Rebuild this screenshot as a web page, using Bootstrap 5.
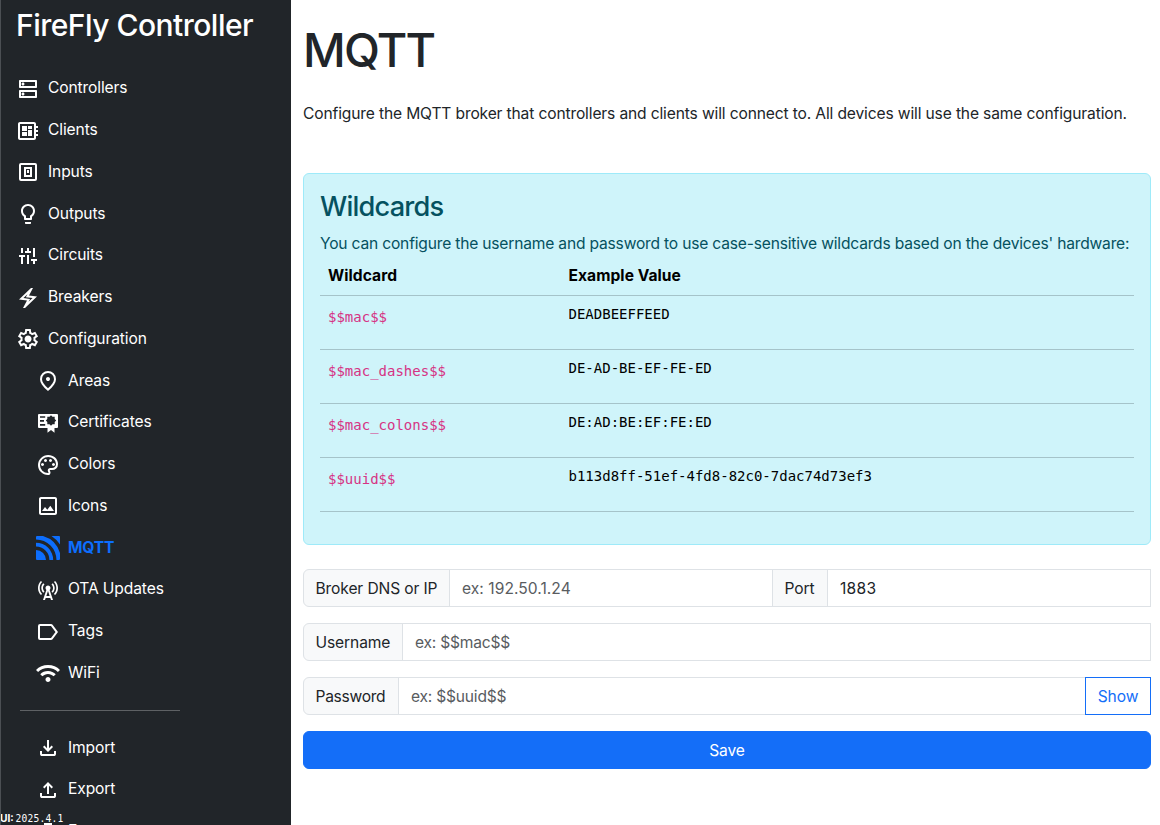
<!DOCTYPE html>
<html lang="en">
<head>
<meta charset="utf-8">
<meta name="viewport" content="width=device-width, initial-scale=1">
<title>FireFly Controller</title>
<link href="https://cdn.jsdelivr.net/npm/bootstrap@5.3.0/dist/css/bootstrap.min.css" rel="stylesheet">
<script src="https://cdn.jsdelivr.net/npm/bootstrap@5.3.0/dist/js/bootstrap.bundle.min.js"></script>
<style>
body{font-family:Inter,"Liberation Sans",sans-serif;letter-spacing:-.12px}
.app-text,.form-control,.input-group-text,.btn{font-size:15.6px;line-height:24px;letter-spacing:-.12px}
.form-control,.input-group-text,.btn{padding-top:7px;padding-bottom:5px}
.input-group-text{padding-left:11.5px}
.sidebar{width:291px;border-left:1px solid #4b4f53;background:#212529}
.brand{font-size:30px;letter-spacing:-.52px;line-height:36px;padding:7px 0 0 15px;margin-bottom:23.5px}
.side-link{height:41.75px;padding-top:2px;padding-left:15px;gap:8px;color:#fff;font-size:15.6px;line-height:24px}
.side-sub .side-link{padding-left:35px}
.side-link:hover{color:#fff}
.side-link svg{width:24px;height:24px;fill:currentColor;margin-top:1px;flex:none}
.side-link.active{color:#0d6efd;font-weight:700;letter-spacing:-.2px}
.side-rule{width:160px;margin:16.8px 0 15.2px 19px;border-color:#fff;opacity:.28}
.version{font-size:10.2px;line-height:12px;left:-1px;bottom:0;letter-spacing:0}
.version .ver-num{font-family:"DejaVu Sans Mono",monospace;font-size:9.6px;letter-spacing:.2px;margin-left:-1px}
.page{padding:21px 9px 0 12px}
.page-title{font-size:46.8px;line-height:58px;letter-spacing:-1.8px;margin-bottom:23px}
.page-lead{margin-bottom:47px;letter-spacing:-.143px}
.alert-info{--bs-alert-bg:#cff4fa;--bs-alert-color:#055160;--bs-alert-border-color:#9eeaf9}
.wild-title{font-size:27.2px;line-height:32.6px;letter-spacing:-.8px;padding-top:1px}
.wild-text{letter-spacing:-.19px}
.wild-table{--bs-table-bg:transparent;--bs-table-color:#000;--bs-table-border-color:#a5c3c9;line-height:24px}
.wild-table th{font-size:15.6px;letter-spacing:.05px;width:240.5px;padding-bottom:7px}
.wild-table th+th{width:auto}
.wild-table pre{font-size:14px;line-height:21px;margin-bottom:16px}
.wild-table pre,.wild-table code{font-family:"DejaVu Sans Mono",monospace;letter-spacing:0}
.wild-table td{height:54px}
.wild-table code{font-size:14px;line-height:21px}
.input-group{height:38px}
.input-group>.form-control:last-child,.input-group>.btn:last-child{border-radius:0}
.input-group .form-control::placeholder{color:#595c5f}
.form-control.in-digits{letter-spacing:.04px}
.form-control.in-port{letter-spacing:.25px}
.form-control.in-wild{letter-spacing:-.22px}
.lbl-host{width:147px}.lbl-port{width:56px}.lbl-user{width:100px}.lbl-pass{width:96px}
.lbl-pass,.lbl-user,.lbl-host{white-space:nowrap}
.lbl-pass{letter-spacing:-.3px}
.btn-show{width:66px;padding-left:0;padding-right:0;background:#fff}
.btn-primary,.btn-show{--bs-btn-border-color:#146ef8;--bs-btn-color:#146ef8}
.btn-primary{--bs-btn-bg:#146ef8;--bs-btn-color:#fff}
</style>
</head>
<body class="vh-100 overflow-hidden">
<div class="d-flex vh-100">
  <nav class="sidebar position-relative vh-100 overflow-hidden flex-shrink-0 text-white">
    <h2 class="brand">FireFly Controller</h2>
    <div class="d-flex flex-column">
      <a class="side-link d-flex align-items-center text-decoration-none" href="#"><svg viewBox="0 0 24 24"><path d="M19 15v4H5v-4h14m1-2H4c-.55 0-1 .45-1 1v6c0 .55.45 1 1 1h16c.55 0 1-.45 1-1v-6c0-.55-.45-1-1-1zM7 18.5c-.82 0-1.5-.67-1.5-1.5s.68-1.5 1.5-1.5 1.5.67 1.5 1.5-.67 1.5-1.5 1.5zM19 5v4H5V5h14m1-2H4c-.55 0-1 .45-1 1v6c0 .55.45 1 1 1h16c.55 0 1-.45 1-1V4c0-.55-.45-1-1-1zM7 8.5c-.82 0-1.5-.67-1.5-1.5S6.18 5.5 7 5.5s1.5.68 1.5 1.5S7.83 8.5 7 8.5z"/></svg>Controllers</a>
      <a class="side-link d-flex align-items-center text-decoration-none" href="#"><svg viewBox="0 0 24 24"><path d="M22 9V7h-2V5c0-1.1-.9-2-2-2H4c-1.1 0-2 .9-2 2v14c0 1.1.9 2 2 2h14c1.1 0 2-.9 2-2v-2h2v-2h-2v-2h2v-2h-2V9h2zm-4 10H4V5h14v14zM6 13h5v4H6zm6-6h4v3h-4zM6 7h5v5H6zm6 4h4v6h-4z"/></svg>Clients</a>
      <a class="side-link d-flex align-items-center text-decoration-none" href="#"><svg viewBox="0 0 24 24"><path fill-rule="evenodd" d="M5 3h14a2 2 0 0 1 2 2v14a2 2 0 0 1-2 2H5a2 2 0 0 1-2-2V5a2 2 0 0 1 2-2zm0 2v14h14V5zM8 7h8v10H8zm2 2v6h4V9zm1 1h2v3h-2z"/></svg>Inputs</a>
      <a class="side-link d-flex align-items-center text-decoration-none" href="#"><svg viewBox="0 0 24 24"><path d="M9 21c0 .55.45 1 1 1h4c.55 0 1-.45 1-1v-1H9v1zm3-19C8.14 2 5 5.14 5 9c0 2.38 1.19 4.47 3 5.74V17c0 .55.45 1 1 1h6c.55 0 1-.45 1-1v-2.26c1.81-1.27 3-3.36 3-5.74 0-3.86-3.14-7-7-7zm2.85 11.1l-.85.6V16h-4v-2.3l-.85-.6C7.8 12.16 7 10.63 7 9c0-2.76 2.24-5 5-5s5 2.24 5 5c0 1.63-.8 3.16-2.15 4.1z"/></svg>Outputs</a>
      <a class="side-link d-flex align-items-center text-decoration-none" href="#"><svg viewBox="0 -960 960 960"><path d="M200-160v-280h-80v-80h240v80h-80v280h-80Zm0-440v-200h80v200h-80Zm160 0v-80h80v-120h80v120h80v80H360Zm80 440v-360h80v360h-80Zm240 0v-120h-80v-80h240v80h-80v120h-80Zm0-280v-360h80v360h-80Z"/></svg>Circuits</a>
      <a class="side-link d-flex align-items-center text-decoration-none" href="#"><svg viewBox="0 -960 960 960"><path d="m280-80 160-300-320-40 480-460h80L520-580l320 40L360-80h-80Zm222-247 161-154-269-34 63-117-160 154 268 33-63 118Z"/></svg>Breakers</a>
      <a class="side-link d-flex align-items-center text-decoration-none" href="#"><svg viewBox="0 -960 960 960"><path d="m370-80-16-128q-13-5-24.5-12T307-235l-119 50L78-375l103-78q-1-7-1-13.5v-27q0-6.500 1-13.500L78-585l110-190 119 50q11-8 23-15t24-12l16-128h220l16 128q13 5 24.5 12t22.500 15l119-50 110 190-103 78q1 7 1 13.500v27q0 6.500-2 13.500l103 78-110 190-118-50q-11 8-23 15t-24 12L590-80H370Zm70-80h79l14-106q31-8 57.500-23.500T639-327l99 41 39-68-86-65q5-14 7-29.500t2-31.500q0-16-2-31.500t-7-29.500l86-65-39-68-99 42q-22-23-48.500-38.500T533-694l-13-106h-79l-14 106q-31 8-57.500 23.500T321-633l-99-41-39 68 86 64q-5 15-7 30t-2 32q0 16 2 31t7 30l-86 65 39 68 99-42q22 23 48.500 38.500T427-266l13 106Zm42-180q58 0 99-41t41-99q0-58-41-99t-99-41q-59 0-99.500 41T342-480q0 58 40.500 99t99.500 41Z"/></svg>Configuration</a>
    </div>
    <div class="side-sub d-flex flex-column">
      <a class="side-link d-flex align-items-center text-decoration-none" href="#"><svg viewBox="0 -960 960 960"><path d="M480-480q33 0 56.500-23.500T560-560q0-33-23.500-56.500T480-640q-33 0-56.500 23.500T400-560q0 33 23.500 56.500T480-480Zm0 294q122-112 181-203.500T720-552q0-109-69.500-178.500T480-800q-101 0-170.500 69.500T240-552q0 71 59 162.500T480-186Zm0 106Q319-217 239.500-334.500T160-552q0-150 96.500-239T480-880q127 0 223.500 89T800-552q0 100-79.500 217.500T480-80Z"/></svg>Areas</a>
      <a class="side-link d-flex align-items-center text-decoration-none" href="#"><svg viewBox="0 0 24 24"><path fill-rule="evenodd" d="M3 3h18a1 1 0 0 1 1 1v12a1 1 0 0 1-1 1h-2.500v4.700L15 19l-3.500 2.700V17H3a1 1 0 0 1-1-1V4a1 1 0 0 1 1-1zm1 2.200v1.600h5.200V5.200zM4 9v1.700h4V9zm0 4v1.700h5.200V13zM15 4.300l-1.500 1.500h-2.200v2.200L9.800 9.500l1.500 1.600v2.200h2.200l1.500 1.500 1.500-1.500h2.200v-2.200l1.500-1.600L18.700 8V5.800h-2.200z"/></svg>Certificates</a>
      <a class="side-link d-flex align-items-center text-decoration-none" href="#"><svg viewBox="0 -960 960 960"><path d="M480-80q-82 0-155-31.500t-127.500-86Q143-252 111.500-325T80-480q0-83 32.500-156t88-127Q256-817 330-848.500T488-880q80 0 151 27.500t124.500 76q53.500 48.500 85 115T880-518q0 115-70 176.500T640-280h-74q-9 0-12.500 5t-3.500 11q0 12 15 34.500t15 51.500q0 50-27.500 74T480-80Zm0-400Zm-220 40q26 0 43-17t17-43q0-26-17-43t-43-17q-26 0-43 17t-17 43q0 26 17 43t43 17Zm120-160q26 0 43-17t17-43q0-26-17-43t-43-17q-26 0-43 17t-17 43q0 26 17 43t43 17Zm200 0q26 0 43-17t17-43q0-26-17-43t-43-17q-26 0-43 17t-17 43q0 26 17 43t43 17Zm120 160q26 0 43-17t17-43q0-26-17-43t-43-17q-26 0-43 17t-17 43q0 26 17 43t43 17ZM480-160q9 0 14.500-5t5.500-13q0-14-15-33t-15-57q0-42 29-67t71-25h70q66 0 113-38.500T800-518q0-121-92.500-201.500T488-800q-136 0-232 93t-96 227q0 133 93.500 226.500T480-160Z"/></svg>Colors</a>
      <a class="side-link d-flex align-items-center text-decoration-none" href="#"><svg viewBox="0 0 24 24"><path d="M19 5v14H5V5h14m0-2H5c-1.100 0-2 .9-2 2v14c0 1.100.9 2 2 2h14c1.100 0 2-.9 2-2V5c0-1.100-.9-2-2-2z"/><path d="M6 17l3-4 2.300 2.700 3-3.900L18 17z"/></svg>Icons</a>
      <a class="side-link active d-flex align-items-center text-decoration-none" href="#"><svg viewBox="0 0 24 24"><path d="M0 14a10 10 0 0 1 10 10H1a1 1 0 0 1-1-1zM0 6.800A17.200 17.200 0 0 1 17.200 24h-3.800A13.400 13.400 0 0 0 0 10.600zM0 1a1 1 0 0 1 1-1h6A25 25 0 0 1 24 17v6a1 1 0 0 1-1 1h-2.500A20.500 20.500 0 0 0 0 3.500zM15.500 0H23a1 1 0 0 1 1 1v7.500A29 29 0 0 0 15.500 0z"/></svg>MQTT</a>
      <a class="side-link d-flex align-items-center text-decoration-none" href="#"><svg viewBox="0 0 24 24"><path d="M7.300 14.700l1.200-1.200c-1-1-1.500-2.300-1.500-3.500 0-1.300.5-2.600 1.500-3.500L7.300 5.300c-1.300 1.300-2 3-2 4.700s.7 3.400 2 4.700zM19.100 2.900l-1.200 1.200c1.600 1.600 2.400 3.800 2.400 5.900 0 2.100-.8 4.300-2.400 5.900l1.200 1.200c2-2 2.900-4.500 2.900-7.100 0-2.600-1-5.100-2.900-7.100zM6.100 4.100L4.900 2.900C3 4.900 2 7.400 2 10c0 2.600 1 5.100 2.900 7.100l1.200-1.200c-1.600-1.600-2.400-3.800-2.400-5.900 0-2.100.8-4.300 2.400-5.900zM16.700 14.700c1.300-1.300 2-3 2-4.700-.1-1.700-.7-3.400-2-4.700l-1.200 1.200c1 1 1.500 2.300 1.500 3.500 0 1.300-.5 2.600-1.500 3.500l1.200 1.200zM14.500 10c0-1.380-1.120-2.500-2.500-2.500S9.500 8.620 9.500 10c0 .76.34 1.420.87 1.880L7 22h2l.67-2h4.670L15 22h2l-3.370-10.120c.53-.46.87-1.120.87-1.880zM10.330 18L12 13l1.670 5h-3.340z"/></svg>OTA Updates</a>
      <a class="side-link d-flex align-items-center text-decoration-none" href="#"><svg viewBox="0 0 24 24"><path fill-rule="evenodd" d="M4 4h11a2 2 0 0 1 1.600.8L22 12l-5.400 7.200a2 2 0 0 1-1.600.8H4a2 2 0 0 1-2-2V6a2 2 0 0 1 2-2zm0 2v12h11l4.500-6L15 6z"/></svg>Tags</a>
      <a class="side-link d-flex align-items-center text-decoration-none" href="#"><svg viewBox="0 -960 960 960"><path d="M480-120q-42 0-71-29t-29-71q0-42 29-71t71-29q42 0 71 29t29 71q0 42-29 71t-71 29ZM254-346l-84-86q59-59 138.500-93.500T480-560q92 0 171.500 35T790-430l-84 84q-44-44-102-69t-124-25q-66 0-124 25t-102 69ZM84-516 0-600q92-94 215-147t265-53q142 0 265 53t215 147l-84 84q-77-77-178.500-120.500T480-680q-116 0-217.500 43.500T84-516Z"/></svg>WiFi</a>
      <hr class="side-rule">
      <a class="side-link d-flex align-items-center text-decoration-none" href="#"><svg viewBox="0 -960 960 960"><path d="M480-320 280-520l56-58 104 104v-326h80v326l104-104 56 58-200 200ZM240-160q-33 0-56.500-23.500T160-240v-120h80v120h480v-120h80v120q0 33-23.500 56.500T720-160H240Z"/></svg>Import</a>
      <a class="side-link d-flex align-items-center text-decoration-none" href="#"><svg viewBox="0 -960 960 960"><path d="M440-320v-326L336-542l-56-58 200-200 200 200-56 58-104-104v326h-80ZM240-160q-33 0-56.500-23.500T160-240v-120h80v120h480v-120h80v120q0 33-23.500 56.500T720-160H240Z"/></svg>Export</a>
      <a class="side-link d-flex align-items-center text-decoration-none" href="#"><svg viewBox="0 0 24 24"><path d="M8 3h8v2h3a2 2 0 0 1 2 2v12a2 2 0 0 1-2 2H5a2 2 0 0 1-2-2V7a2 2 0 0 1 2-2h3zM5 9v10h14V9z"/></svg>Events</a>
    </div>
    <div class="version position-absolute"><b>UI:</b> <span class="ver-num">2025.4.1</span></div>
  </nav>
  <main class="page flex-grow-1">
    <h1 class="page-title">MQTT</h1>
    <p class="page-lead app-text">Configure the MQTT broker that controllers and clients will connect to. All devices will use the same configuration.</p>
    <div class="alert alert-info mb-4">
      <h3 class="wild-title mb-2">Wildcards</h3>
      <div class="wild-text app-text text-nowrap">You can configure the username and password to use case-sensitive wildcards based on the devices' hardware:</div>
      <table class="wild-table table">
        <thead><tr><th>Wildcard</th><th>Example Value</th></tr></thead>
        <tbody>
          <tr><td><code>$$mac$$</code></td><td><pre>DEADBEEFFEED</pre></td></tr>
          <tr><td><code>$$mac_dashes$$</code></td><td><pre>DE-AD-BE-EF-FE-ED</pre></td></tr>
          <tr><td><code>$$mac_colons$$</code></td><td><pre>DE:AD:BE:EF:FE:ED</pre></td></tr>
          <tr><td><code>$$uuid$$</code></td><td><pre>b113d8ff-51ef-4fd8-82c0-7dac74d73ef3</pre></td></tr>
        </tbody>
      </table>
    </div>
    <div class="input-group mb-3">
      <span class="input-group-text lbl-host">Broker DNS or IP</span>
      <input class="form-control in-digits" type="text" placeholder="ex: 192.50.1.24">
      <span class="input-group-text lbl-port">Port</span>
      <input class="form-control in-port" type="text" value="1883">
    </div>
    <div class="input-group mb-3">
      <span class="input-group-text lbl-user">Username</span>
      <input class="form-control in-wild" type="text" placeholder="ex: $$mac$$">
    </div>
    <div class="input-group mb-3">
      <span class="input-group-text lbl-pass">Password</span>
      <input class="form-control in-wild" type="text" placeholder="ex: $$uuid$$">
      <button class="btn btn-outline-primary btn-show" type="button">Show</button>
    </div>
    <button class="btn btn-primary w-100" type="button">Save</button>
  </main>
</div>
</body>
</html>
